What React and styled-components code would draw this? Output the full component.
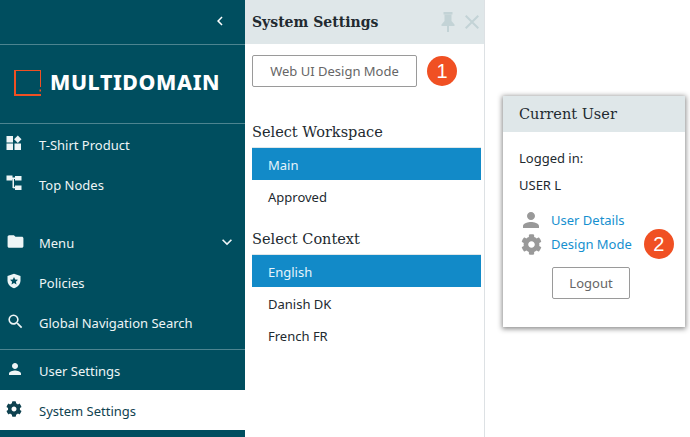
import React from "react";
import styled, { createGlobalStyle } from "styled-components";
import { MdFolder, MdSearch, MdPerson, MdKeyboardArrowDown, MdKeyboardArrowLeft } from "react-icons/md";
import { FaCog } from "react-icons/fa";

const Global = createGlobalStyle`
  html, body {
    margin: 0;
    padding: 0;
    background: #fff;
  }
  * {
    box-sizing: border-box;
  }
`;

const serif = `"DejaVu Serif", "Liberation Serif", serif`;
const sans = `"Noto Sans", "Open Sans", sans-serif`;

const LogoMark = () => (
  <svg width="27" height="26" viewBox="0 0 27 26" fill="#f05023">
    <path d="M0 0H27V17H26V1H2V24H27V26H0Z" />
    <rect x="25.500" y="19.500" width="1.500" height="2" />
  </svg>
);

const TileIcon = () => (
  <svg width="16" height="16" viewBox="0 0 16 16" fill="currentColor">
    <rect x="0.5" y="1" width="6.5" height="6.5" />
    <rect x="0.5" y="8.5" width="6.5" height="6.5" />
    <rect x="8.5" y="8.5" width="6.5" height="6.5" />
    <path d="M11.8 0.5 L15.5 4.2 L11.8 7.9 L8.1 4.2 Z" />
  </svg>
);

const TreeIcon = () => (
  <svg width="16" height="16" viewBox="0 0 16 16" fill="currentColor">
    <rect x="0.5" y="0.5" width="6" height="5" />
    <rect x="9" y="1" width="6.5" height="4.5" />
    <rect x="9" y="10.5" width="6.5" height="4.5" />
    <rect x="6" y="2.5" width="3" height="1.5" />
    <rect x="6.5" y="3" width="1.5" height="10" />
    <rect x="7" y="11.8" width="3" height="1.5" />
  </svg>
);

const ShieldIcon = () => (
  <svg width="16" height="16" viewBox="0 0 16 16">
    <path
      fill="currentColor"
      d="M8 .7 14.5 3v4.6c0 3.700-2.700 6.600-6.500 7.700C4.200 14.200 1.500 11.300 1.500 7.600V3Z"
    />
    <path
      fill="#004e5f"
      d="M8 3.900 9.200 6.500 12 6.800 9.900 8.700 10.500 11.500 8 10.100 5.500 11.500 6.100 8.700 4 6.800 6.800 6.500Z"
    />
  </svg>
);

const PinIcon = () => (
  <svg width="14" height="20" viewBox="0 0 14 20" fill="currentColor">
    <rect x="2.500" y="0" width="9" height="2.500" />
    <path d="M3.500 2.500H10.500V9L13.500 12.500V14H0.500V12.500L3.500 9Z" />
    <rect x="6" y="14" width="2" height="6" />
  </svg>
);

const CloseIcon = () => (
  <svg width="14" height="14" viewBox="0 0 14 14" stroke="currentColor" strokeWidth="2" fill="none">
    <path d="M0.700 0.700 13.300 13.300M13.300 0.700 0.700 13.300" />
  </svg>
);

const Layout = styled.div`
  display: flex;
  width: 690px;
  height: 437px;
  overflow: hidden;
  font-family: ${sans};
`;

const Sidebar = styled.aside`
  width: 245px;
  flex-shrink: 0;
  background: #004e5f;
  color: #fff;
  display: flex;
  flex-direction: column;
`;

const CollapseBar = styled.div`
  height: 45px;
  border-bottom: 1px solid #4d8490;
  display: flex;
  align-items: center;
  justify-content: flex-end;
  padding: 0 16px 3px 0;
  font-size: 18px;
`;

const Brand = styled.div`
  height: 79px;
  border-bottom: 1px solid #4d8490;
  display: flex;
  align-items: center;
  gap: 9px;
  padding-left: 14px;
  padding-bottom: 3px;
`;

const BrandName = styled.span`
  font-size: 21.300px;
  font-weight: 800;
  letter-spacing: 0.6px;
  margin-top: -3px;
`;

const NavGroup = styled.nav`
  padding-bottom: ${(p) => p.$bottom || 0}px;
  border-bottom: ${(p) => (p.$divider ? "1px solid #4d8490" : "none")};
`;

const NavRow = styled.div`
  height: 40px;
  display: flex;
  align-items: center;
  padding: 2px 0 0 6px;
  font-size: 13px;
  background: ${(p) => (p.$active ? "#fff" : "transparent")};
  color: ${(p) => (p.$active ? "#0f4250" : "#eef5f6")};
`;

const NavIcon = styled.span`
  width: 33px;
  display: flex;
  align-items: center;
  flex-shrink: 0;
  font-size: 17px;
  margin-top: -4px;
`;

const NavArrow = styled.span`
  margin-left: auto;
  margin-right: 8px;
  margin-top: -2px;
  display: flex;
  font-size: 20px;
`;

const SettingsPanel = styled.section`
  width: 240px;
  flex-shrink: 0;
  border-right: 1px solid #dde1e4;
  display: flex;
  flex-direction: column;
`;

const PanelHead = styled.header`
  height: 44px;
  background: #dfe7e9;
  display: flex;
  align-items: center;
  gap: 10px;
  padding: 0 5px 0 7px;
`;

const PanelTitle = styled.h2`
  margin: 0;
  font-family: ${serif};
  font-size: 14px;
  font-weight: 700;
  color: #222a30;
  flex: 1;
`;

const HeadIcon = styled.span`
  display: flex;
  color: #c3d3d6;
`;

const PanelBody = styled.div`
  padding: 11px 3px 0 7px;
`;

const ModeRow = styled.div`
  display: flex;
  align-items: center;
  gap: 10px;
`;

const OutlineButton = styled.button`
  width: ${(p) => p.$width}px;
  height: 32px;
  background: #fff;
  border: 1px solid #9a9a9a;
  border-radius: 2px;
  color: #666;
  font-family: ${sans};
  font-size: 13px;
  padding: 0;
`;

const Badge = styled.span`
  width: 30px;
  height: 30px;
  border-radius: 50%;
  background: #f05023;
  color: #fff;
  font-family: "Liberation Sans", sans-serif;
  font-size: 20px;
  display: flex;
  align-items: center;
  justify-content: center;
`;

const GroupTitle = styled.h3`
  margin: ${(p) => p.$top}px 0 6px;
  font-family: ${serif};
  font-size: 14.500px;
  line-height: 18px;
  font-weight: 400;
  color: #222a30;
`;

const OptionList = styled.div`
  border-top: 1px solid #dfe7e9;
`;

const Option = styled.div`
  height: 32px;
  display: flex;
  align-items: center;
  padding: 2px 0 0 16px;
  font-size: 13px;
  background: ${(p) => (p.$selected ? "#128ac8" : "transparent")};
  color: ${(p) => (p.$selected ? "#e6f4fb" : "#222a30")};
`;

const Stage = styled.main`
  flex: 1;
  padding: 96px 5px 0 18px;
`;

const UserCard = styled.div`
  height: 231px;
  background: #fff;
  box-shadow: 0 1px 5px 1px rgba(0, 0, 0, 0.45);
`;

const CardHead = styled.header`
  height: 36px;
  background: #dfe7e9;
  display: flex;
  align-items: center;
  padding-left: 16px;
  font-family: ${serif};
  font-size: 14.500px;
  color: #222a30;
`;

const CardBody = styled.div`
  padding: 12px 0 0 16px;
  font-size: 13px;
  color: #222a30;
`;

const InfoLine = styled.div`
  height: 27px;
  display: flex;
  align-items: center;
`;

const Links = styled.div`
  margin-top: 10px;
  display: flex;
  flex-direction: column;
`;

const LinkRow = styled.div`
  height: 24px;
  display: flex;
  align-items: center;
  gap: 8px;
  color: #1690cf;
`;

const LinkIcon = styled.span`
  width: 24px;
  display: flex;
  justify-content: center;
  color: #999;
  font-size: ${(p) => p.$size}px;
`;

const SmallBadge = styled(Badge)`
  margin-left: 4px;
`;

const LogoutWrap = styled.div`
  margin: 11px 0 0 33px;
`;

const sideTop = [
  { label: "T-Shirt Product", icon: <TileIcon /> },
  { label: "Top Nodes", icon: <TreeIcon /> },
];

const sideMid = [
  { label: "Menu", icon: <MdFolder size={19} />, arrow: true },
  { label: "Policies", icon: <ShieldIcon /> },
  { label: "Global Navigation Search", icon: <MdSearch size={19} /> },
];

const workspaces = ["Main", "Approved"];
const contexts = ["English", "Danish DK", "French FR"];

const SideLink = ({ item, active }) => (
  <NavRow $active={active}>
    <NavIcon>{item.icon}</NavIcon>
    {item.label}
    {item.arrow && (
      <NavArrow>
        <MdKeyboardArrowDown />
      </NavArrow>
    )}
  </NavRow>
);

export default function App() {
  return (
    <Layout>
      <Global />
      <Sidebar>
        <CollapseBar>
          <MdKeyboardArrowLeft />
        </CollapseBar>
        <Brand>
          <LogoMark />
          <BrandName>MULTIDOMAIN</BrandName>
        </Brand>
        <NavGroup $bottom={18}>
          {sideTop.map((item) => (
            <SideLink key={item.label} item={item} />
          ))}
        </NavGroup>
        <NavGroup $bottom={7} $divider>
          {sideMid.map((item) => (
            <SideLink key={item.label} item={item} />
          ))}
        </NavGroup>
        <NavGroup>
          <SideLink item={{ label: "User Settings", icon: <MdPerson size={18} /> }} />
          <SideLink item={{ label: "System Settings", icon: <FaCog size={16} /> }} active />
        </NavGroup>
      </Sidebar>

      <SettingsPanel>
        <PanelHead>
          <PanelTitle>System Settings</PanelTitle>
          <HeadIcon>
            <PinIcon />
          </HeadIcon>
          <HeadIcon>
            <CloseIcon />
          </HeadIcon>
        </PanelHead>
        <PanelBody>
          <ModeRow>
            <OutlineButton $width={165}>Web UI Design Mode</OutlineButton>
            <Badge>1</Badge>
          </ModeRow>
          <GroupTitle $top={36}>Select Workspace</GroupTitle>
          <OptionList>
            {workspaces.map((w, i) => (
              <Option key={w} $selected={i === 0}>{w}</Option>
            ))}
          </OptionList>
          <GroupTitle $top={18}>Select Context</GroupTitle>
          <OptionList>
            {contexts.map((c, i) => (
              <Option key={c} $selected={i === 0}>{c}</Option>
            ))}
          </OptionList>
        </PanelBody>
      </SettingsPanel>

      <Stage>
        <UserCard>
          <CardHead>Current User</CardHead>
          <CardBody>
            <InfoLine>Logged in:</InfoLine>
            <InfoLine>USER L</InfoLine>
            <Links>
              <LinkRow>
                <LinkIcon $size={26}>
                  <MdPerson />
                </LinkIcon>
                User Details
              </LinkRow>
              <LinkRow>
                <LinkIcon $size={21}>
                  <FaCog />
                </LinkIcon>
                Design Mode
                <SmallBadge>2</SmallBadge>
              </LinkRow>
            </Links>
            <LogoutWrap>
              <OutlineButton $width={78}>Logout</OutlineButton>
            </LogoutWrap>
          </CardBody>
        </UserCard>
      </Stage>
    </Layout>
  );
}
